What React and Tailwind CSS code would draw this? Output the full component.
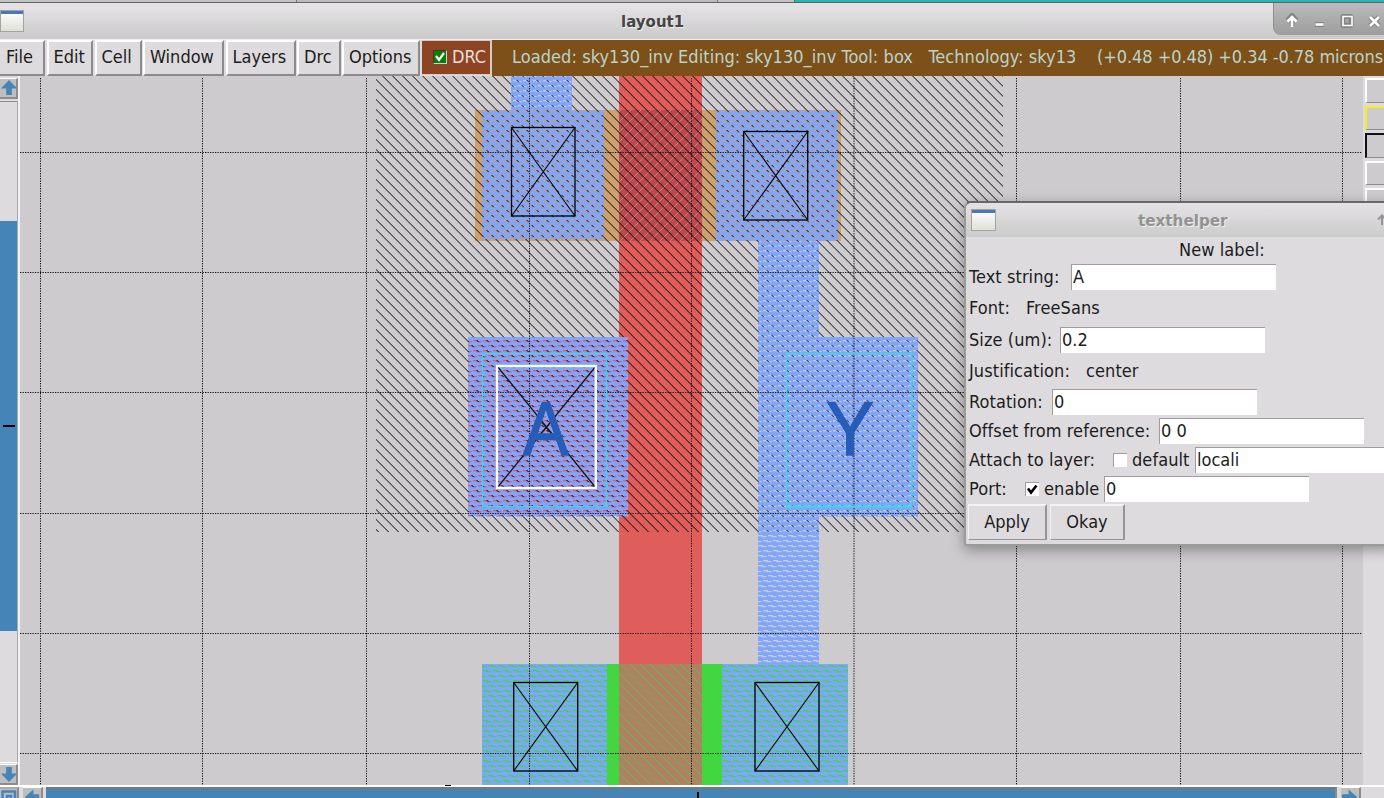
import React from "react";

const SANS = "font-['DejaVu_Sans_Condensed','DejaVu_Sans',sans-serif] [font-stretch:condensed]";

const menus = [
  { label: "File", box: "w-[45px] pl-[6px] border-l-0" },
  { label: "Edit", box: "w-[46.500px] pl-[5px]" },
  { label: "Cell", box: "w-[47px] pl-[5px]" },
  { label: "Window", box: "w-[81px] pl-[5px]" },
  { label: "Layers", box: "w-[70px] pl-[5px]" },
  { label: "Drc", box: "w-[43.5px] pl-[5px]" },
  { label: "Options", box: "w-[78px] pl-[5px]" },
];

function WindowIcon({ className }) {
  return (
    <div className={"h-[22px] border border-[#a3a3a0] bg-linear-to-b from-white to-[#dfe0d8] " + className}>
      <div className="h-[3px] bg-[#4a78b4]" />
    </div>
  );
}

function Arrow({ dir, className }) {
  const paths = {
    up: "M9.5 1 L18 10 H12.5 V17 H6.5 V10 H1 Z",
    down: "M6.5 2 H12.5 V9 H18 L9.5 18 L1 9 H6.5 Z",
    left: "M2 9.5 L11 1.5 V6.5 H17 V12.5 H11 V17.5 Z",
    right: "M17 9.5 L8 1.5 V6.5 H1 V12.5 H8 V17.5 Z",
  };
  return (
    <div className={"shrink-0 overflow-hidden border-t border-r-2 border-b-2 border-t-white border-r-[#8c8c8c] border-b-[#8c8c8c] bg-[#bebebe] " + className}>
      <svg width="18" height="18" viewBox="0 0 19 19"><path d={paths[dir]} fill="#4484b6" /></svg>
    </div>
  );
}

function TitleControls() {
  return (
    <div className="ml-auto h-[32px] w-[111px] rounded-bl-[8px] border-l border-[#8f8f8f] bg-linear-to-b from-[#bdbbbd] to-[#9d9d9d]">
      <svg width="110" height="32" fill="none">
        <g stroke="#858585" strokeWidth="5" strokeLinejoin="round">
          <path d="M18 23V13M13.500 17.5l4.500-5 4.500 5" />
          <path d="M41 21.5h9M69 13.5h8v9h-8z" />
          <path d="M96 14l9 9M105 14l-9 9" />
        </g>
        <g stroke="#fff" strokeWidth="2.6">
          <path d="M18 24V14M13.500 18.500l4.500-4.500L22.500 18.500" />
          <path d="M41.500 21.5h8" />
          <path d="M69 13.500h9v9h-9z" strokeWidth="1.6" />
          <path d="M96 14l9 9M105 14l-9 9" />
        </g>
      </svg>
    </div>
  );
}

function Contact({ x, y, w, h }) {
  return (
    <g fill="none" stroke="#000">
      <rect x={x} y={y} width={w} height={h} strokeWidth="1.3" />
      <path d={`M${x} ${y}l${w} ${h}M${x + w} ${y}l${-w} ${h}`} strokeWidth="1.1" />
    </g>
  );
}

const gridX = [40.5, 202.5, 366.5, 529.5, 691.5, 854, 1016.5, 1180.5, 1342.5];
const gridY = [152.5, 272.5, 392.5, 513.5, 633.5, 753.5];
const localInterconnect = [
  [511, 76, 61, 34],
  [482, 110, 122, 129],
  [716, 110, 122, 131],
  [758, 241, 61.4, 96],
  [758, 337, 159.5, 180],
  [758, 517, 61.4, 147],
  [468, 337, 160, 180],
  [482, 664, 125, 121],
  [722, 664, 126, 121],
];

function LayoutCanvas() {
  return (
    <svg width="1343" height="709" viewBox="20 76 1343 709" className="block shrink-0 bg-[#cecbce]" shapeRendering="crispEdges">
      <defs>
        <pattern id="well" width="10" height="10" patternUnits="userSpaceOnUse" x="6.6" y="0">
          <path d="M-10 -10L20 20M-10 0L10 20M0 -10L20 10" stroke="#000" strokeWidth=".98" shapeRendering="auto" />
        </pattern>
        <pattern id="gate" width="10" height="10" patternUnits="userSpaceOnUse" x="1" y="0">
          <path d="M-10 20L20 -10M-10 10L10 -10M0 20L20 0" stroke="#c48f67" strokeWidth=".9" shapeRendering="auto" />
        </pattern>
        <pattern id="ngate" width="10" height="10" patternUnits="userSpaceOnUse" x="6" y="0">
          <path d="M-10 -10L20 20M-10 0L10 20M0 -10L20 10" stroke="#62bd48" strokeWidth=".9" shapeRendering="auto" />
        </pattern>
        <pattern id="gaps" width="10" height="10" patternUnits="userSpaceOnUse" x="3" y="0">
          <rect width="10" height="10" fill="#fff" />
          <g fill="#000" shapeRendering="auto">
            <rect x="0" y="0" width="5" height="1.300" />
            <rect x="3.500" y="1" width="5" height="1.200" />
            <rect x="5" y="5" width="5" height="1.300" />
            <rect x="8.500" y="6" width="1.500" height="1.200" />
            <rect x="0" y="6" width="3.500" height="1.200" />
          </g>
        </pattern>
        <mask id="li" maskUnits="userSpaceOnUse" x="20" y="76" width="1343" height="709">
          <rect x="20" y="76" width="1343" height="709" fill="url(#gaps)" />
        </mask>
      </defs>
      <rect x="619.4" y="76" width="82.500" height="709" fill="#df5d5b" />
      <rect x="475" y="110" width="144.400" height="131.400" fill="#cda070" />
      <rect x="702" y="110" width="139" height="131.400" fill="#cda070" />
      <rect x="619.4" y="110" width="82.500" height="131.400" fill="#bc4851" />
      <rect x="619.4" y="110" width="82.500" height="131.400" fill="url(#gate)" />
      <rect x="468" y="337" width="160" height="179" fill="#df5d5b" />
      <rect x="482" y="664" width="366" height="121" fill="#42d740" />
      <rect x="619.4" y="664" width="82.500" height="121" fill="#ad8262" />
      <rect x="619.4" y="664" width="82.500" height="121" fill="url(#ngate)" />
      <rect x="376" y="76" width="627" height="456" fill="url(#well)" />
      <g mask="url(#li)" fill="#7ea5ff">
        {localInterconnect.map(([x, y, w, h], i) => (
          <rect key={i} x={x} y={y} width={w} height={h} />
        ))}
      </g>
      <g stroke="#111" strokeWidth="1" strokeDasharray="1.3 1.200" shapeRendering="auto">
        {gridX.map((x) => <path key={x} d={`M${x} 78V785`} />)}
        {gridY.map((y) => <path key={y} d={`M20 ${y}H1362`} />)}
      </g>
      <g shapeRendering="auto">
        <Contact x={511.5} y={127.5} w={63.5} h={88.5} />
        <Contact x={743.700} y={131.500} w={64} h={88.500} />
        <Contact x={513.700} y={682.500} w={64} h={88.500} />
        <Contact x={755} y={682.500} w={64} h={88.500} />
        <path d="M497 366L596 488M596 366L497 488" stroke="#111" strokeWidth="1.2" />
        <path d="M540 421l12 13M552 421l-12 13" stroke="#111" strokeWidth="1" />
        <g fill="none" stroke="#36dcea" strokeWidth="1.300">
          <rect x="482.500" y="353.700" width="124" height="152.800" />
          <rect x="786.500" y="353.700" width="125.500" height="152.800" />
          <path d="M786.500 506.500H912" strokeWidth="2" />
        </g>
        <rect x="497" y="366" width="98.800" height="122" fill="none" stroke="#fff" strokeWidth="2.300" />
        <g fill="#275cb8" stroke="#275cb8" strokeWidth="1.300" fontFamily="'Liberation Sans', sans-serif" fontSize="75.500">
          <text x="523" y="454.500" textLength="45.500" lengthAdjust="spacingAndGlyphs">A</text>
          <text x="826" y="454.500" textLength="48" lengthAdjust="spacingAndGlyphs">Y</text>
        </g>
      </g>
    </svg>
  );
}

function Label({ children, className = "" }) {
  return <span className={"whitespace-pre tracking-[0.08px] " + className}>{children}</span>;
}

function Entry({ value, className = "" }) {
  return (
    <input
      readOnly
      value={value}
      className={"h-[26px] w-[205px] shrink-0 border-t border-l border-[#a09ca0] bg-white pb-[2px] pl-px text-[#1c1c1c] outline-none " + className}
    />
  );
}

function Check({ checked, className = "" }) {
  return (
    <span className={"flex h-[14px] w-[14px] shrink-0 border-t border-l border-[#a09ca0] bg-white " + className}>
      {checked && <svg width="13" height="13" fill="none" stroke="#000" strokeWidth="2.600"><path d="M2 5.500l3 4 5.500-7" /></svg>}
    </span>
  );
}

function TextHelper() {
  const button = "flex h-[36px] items-center justify-center border border-t-2 border-r-2 border-t-[#f4f3f4] border-l-[#f4f3f4] border-r-[#969496] border-b-[#969496] pb-[2px]";
  return (
    <div className="absolute top-[201px] left-[964px] flex h-[345px] w-[430px] flex-col rounded-l-[7px] rounded-bl-[3px] border-2 border-[#979c97] border-t-[#686868] bg-[#dddbde] text-[#1c1c1c] shadow-[0_4px_14px_rgba(0,0,0,0.35)]">
      <div className="flex h-[34px] shrink-0 items-center rounded-tl-[6px] bg-linear-to-b from-[#e5e2e5] to-[#cbcbcb] pl-[5px]">
        <WindowIcon className="w-[25px]" />
        <span className="ml-[142px] w-[92px] pt-[3px] font-['DejaVu_Sans',sans-serif] text-[15.2px] font-bold text-[#929292] [font-stretch:normal] [text-shadow:1px_1px_0_#eee]">texthelper</span>
        <svg width="14" height="14" className="ml-[145px] shrink-0" fill="none" stroke="#969696" strokeWidth="2"><path d="M7 12V3M3 6.500l4-4 4 4" /></svg>
      </div>
      <div className="-mt-px flex flex-col pl-[3px]">
        <div className="flex h-[26px] items-center pt-px pl-[210px]"><Label>New label:</Label></div>
        <div className="flex h-[30px] items-center"><Label className="w-[102px]">Text string:</Label><Entry value="A" className="w-[204px]" /></div>
        <div className="flex h-[32px] items-center"><Label className="w-[57px]">Font:</Label><Label>FreeSans</Label></div>
        <div className="flex h-[31px] items-center"><Label className="w-[91px]">Size (um):</Label><Entry value="0.2" /></div>
        <div className="flex h-[31px] items-center"><Label className="w-[117px]">Justification:</Label><Label>center</Label></div>
        <div className="flex h-[31px] items-center"><Label className="w-[83px]">Rotation:</Label><Entry value="0" /></div>
        <div className="flex h-[28px] items-center"><Label className="w-[190px]">Offset from reference:</Label><Entry value="0 0" /></div>
        <div className="flex h-[29px] items-center"><Label className="w-[144px] shrink-0">Attach to layer:</Label><Check /><Label className="ml-[5px] w-[63px] shrink-0">default</Label><Entry value="locali" /></div>
        <div className="flex h-[29px] items-center"><Label className="w-[56px]">Port:</Label><Check checked /><Label className="ml-[5px] w-[60px]">enable</Label><Entry value="0" /></div>
        <div className="-ml-px flex gap-[3px] pt-px">
          <div className={button + " w-[79px]"}>Apply</div>
          <div className={button + " w-[75px]"}>Okay</div>
        </div>
      </div>
    </div>
  );
}

function LayerPalette() {
  const cell = "h-[24.500px] shrink-0 border-t-2 border-l-2 border-b border-b-[#8c8c8c] bg-[#cecbce] ";
  return (
    <div className="flex w-[21px] shrink-0 flex-col gap-[3px] overflow-hidden bg-[#dddbde] pt-[2px] pl-[2px]">
      <div className={cell + "border-t-white border-l-white"} />
      <div className={cell + "border-t-[#f4f020] border-l-[#f4f020]"} />
      <div className={cell + "border-t-[#111] border-l-[#111]"} />
      <div className={cell + "border-t-white border-l-white"} />
      <div className={cell + "border-t-white border-l-white"} />
    </div>
  );
}

export default function App() {
  return (
    <div className={"relative flex h-[798px] w-[1384px] flex-col overflow-hidden bg-[#dddbde] text-[18px] leading-none text-[#1c1c1c] " + SANS}>
      <div className="flex h-[3px] shrink-0 border-b border-[#626262]">
        <div className="w-[297px] border-r border-[#777] bg-[#c4c4c4]" />
        <div className="w-[421px] border-r border-[#777] bg-[#bcbcbc]" />
        <div className="w-[77px] border-r border-[#666] bg-[#c4c4c4]" />
        <div className="flex-1 bg-[#24b6b2]" />
      </div>
      <div className="flex h-[36px] shrink-0 bg-linear-to-b from-[#e7e4e7] to-[#cacaca]">
        <WindowIcon className="mt-[7px] w-[24px]" />
        <span className="mt-[12px] ml-[597px] font-['DejaVu_Sans',sans-serif] text-[15px] font-bold text-[#454545] [font-stretch:normal] [text-shadow:1px_1px_0_#eee]">layout1</span>
        <TitleControls />
      </div>
      <div className="flex h-[37px] shrink-0 border-t border-[#f0eef0] bg-[#dddbde]">
        <div className="flex h-[36px] w-[422px] shrink-0 gap-[1.500px]">
          {menus.map((m) => (
            <div key={m.label} className={"flex shrink-0 items-center border-2 border-t-white border-l-white border-r-[#8c8a8c] border-b-[#8c8a8c] pb-[2px] " + m.box}>
              {m.label}
            </div>
          ))}
        </div>
        <div className="flex h-[35px] w-[70px] shrink-0 items-center border-t border-r-2 border-b border-[#d9cbc4] bg-[#8c4423] pb-px pl-[11px] text-[#ecdfd8]">
          <span className="flex h-[14px] w-[14px] items-center border border-[#d0d0d0] border-t-[#503020] border-l-[#503020] bg-[#078007]">
            <svg width="12" height="12" fill="none" stroke="#fff" strokeWidth="2.200"><path d="M2 5l3 4 5-7" /></svg>
          </span>
          <span className="ml-[5px]">DRC</span>
        </div>
        <div className="flex min-w-0 flex-1 items-center bg-[#7c5018] pb-[2px] text-[#bad4cb]">
          <span className="ml-[20px] w-[563px] shrink-0 overflow-hidden py-1 tracking-[0.06px] whitespace-pre">Loaded: sky130_inv Editing: sky130_inv Tool: box  <span className="pl-[5px]">Technology: sky130A</span></span>
          <span className="ml-[22px] tracking-[-0.06px] whitespace-pre">(+0.48 +0.48) +0.34 -0.78 microns</span>
        </div>
      </div>
      <div className="flex h-[709px] shrink-0">
        <div className="flex w-[20px] shrink-0 flex-col border-r-2 border-[#f2f0f2]">
          <Arrow dir="up" className="mt-[2px] h-[21px]" />
          <div className="mt-[2px] flex h-[662px] w-[18px] shrink-0 flex-col border-y border-r border-t-[#8c8c8c] border-r-[#aaa8aa] border-b-white bg-[#dddbde]">
            <div className="mt-[119px] flex h-[410px] flex-col bg-[#4484b6]"><div className="mt-[204px] ml-[3px] h-[2px] w-[12px] bg-black" /></div>
          </div>
          <Arrow dir="down" className="mt-px h-[21px]" />
        </div>
        <LayoutCanvas />
        <LayerPalette />
      </div>
      <div className="flex h-[13px] shrink-0 overflow-hidden border-t-2 border-white bg-[#dddbde]">
        <div className="h-[20px] w-[19px] shrink-0 border-t-2 border-r-2 border-t-[#aaa] border-r-[#8c8c8c] bg-[#bebebe]">
          <svg width="17" height="17" fill="none" stroke="#4484b6" strokeWidth="2.500"><path d="M2.500 16V2.500H15V16M7 16V7h4v9" /></svg>
        </div>
        <Arrow dir="left" className="ml-[4px] h-[21px] w-[20px]" />
        <div className="ml-[3px] flex h-[20px] w-[1291px] shrink-0 border-t-2 border-r-2 border-t-[#777] border-r-[#8c8c8c] bg-[#4484b6]"><div className="mt-[3px] ml-[651px] h-[15px] w-[2px] bg-black" /></div>
        <Arrow dir="right" className="ml-[4px] h-[21px] w-[20px]" />
      </div>
      <div className="absolute top-[785px] left-[445px] h-px w-[6px] bg-black" />
      <TextHelper />
    </div>
  );
}
